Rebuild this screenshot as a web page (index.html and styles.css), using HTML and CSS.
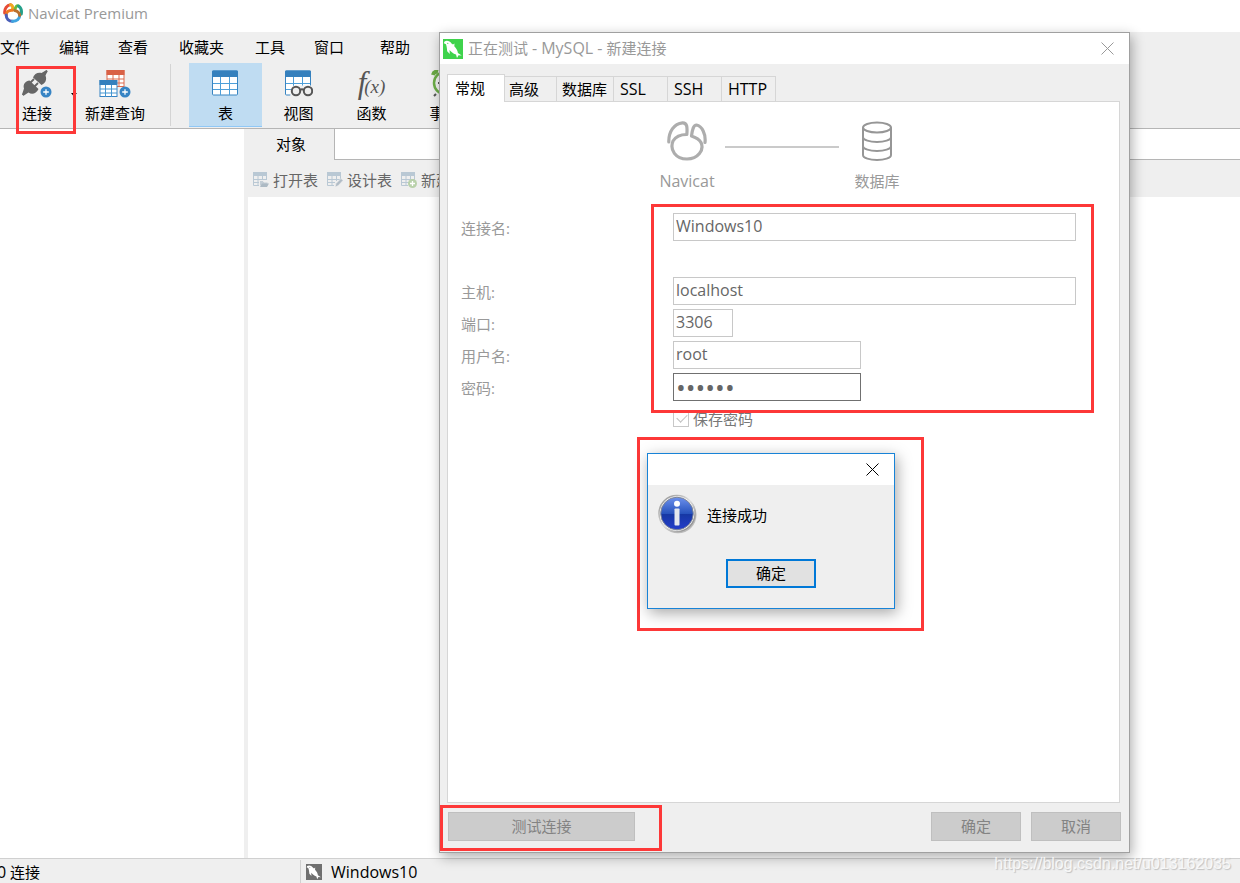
FILE: index.html
```html
<!DOCTYPE html>
<html lang="zh-CN">
<head>
<meta charset="utf-8">
<title>Navicat Premium</title>
<link rel="stylesheet" href="styles.css">
</head>
<body>
<svg class="defs" aria-hidden="true">
  <symbol id="table" viewBox="0 0 26 26"><rect x=".5" y="1" width="25" height="24" rx="1" fill="#fff" stroke="#3885c2"/><path d="M0 1.500Q0 .5 1 .5H25Q26 .5 26 1.500V7H0z" fill="#3580bd"/><path d="M8.500 7V25M17.500 7V25M1 13.500H25M1 19.500H25" stroke="#4d9fd9" fill="none"/></symbol>
  <symbol id="plus" viewBox="0 0 12 12"><circle cx="6" cy="6" r="5.500" fill="#3784c4"/><path d="M6 3.200V8.800M3.200 6H8.800" stroke="#fff" stroke-width="1.300"/></symbol>
  <symbol id="smalltable" viewBox="0 0 16 16"><path d="M0 0H14V4H0z" fill="#b9c8d4"/><path d="M.5 4V13.500H7M5 4V13.500M9.500 4V9M13.500 4V7M0 7.500H14M0 10.500H8" stroke="#b9c8d4" fill="none"/></symbol>
  <symbol id="dolphin" viewBox="0 0 20 20"><path d="M1.500 2.500C4 1 7 2.200 8.500 4.500L10 5.500 11.500 4.500 11.300 7.200C13.500 9.500 14.800 12 14.900 14L18.700 16.500 15.500 16.300 14 19 13 15.500C10 14.600 8 12.700 6.500 11L6.800 15 4.200 12.300C4 9 3.500 6.500 3 5.200L.8 4.200z" fill="#fff"/><circle cx="4.800" cy="4.300" r=".6" fill="currentColor"/></symbol>
</svg>
<div class="app">
  <header class="titlebar">
    <svg class="logo" viewBox="0 0 20 20" fill="none" stroke-width="3" stroke-linecap="round">
      <path d="M1.700 10C1.300 5.500 4 2 7.500 1.700" stroke="#e64b36"/><path d="M7.500 1.700C9.800 1.700 9.800 4 9.600 6.500" stroke="#f0a81f"/>
      <path d="M12 7C12.200 4 14 2.200 15.500 3" stroke="#6cbb3c"/><path d="M15.500 3C18 4.500 18.800 8 18.300 11" stroke="#25a08a"/>
      <path d="M9.500 7.200C5.500 6.900 3.200 9.200 3.200 12" stroke="#ef7a22"/><path d="M3.200 12C3.200 16 5.800 18.300 9.500 18.300" stroke="#4a5fb8"/><path d="M9.500 18.300C14 18.300 16.800 16 16.700 12.300" stroke="#3fa4e0"/><path d="M16.700 12.300C16.500 10 14.500 8.200 12 7.600" stroke="#b9702f"/>
    </svg>
    <span>Navicat Premium</span>
  </header>
  <nav class="menubar">
    <button>文件</button><button>编辑</button><button>查看</button><button class="spaced">收藏夹</button><button class="spaced">工具</button><button>窗口</button><button class="help">帮助</button>
  </nav>
  <div class="toolbar">
    <button class="tool connect">
      <svg width="32" height="28" viewBox="0 0 32 28"><g fill="#666"><path d="M1 24.500L3 18.500C1.500 14 5 11 8.500 10.500L17.500 19C15.500 23.500 11 25 7.500 22.500L2.500 25.800z"/><path d="M12 7.500C13 4 17 1.800 20.500 3L25.500 0 26.500 1 24.500 5.500C26.300 10 24 13.500 20.500 15z"/></g><path d="M9.500 12.500L13 9M13.500 16.500L17 13" stroke="#666" stroke-width="1.800"/><path d="M2 25L4.500 21.500M22.500 4.500L26 1" stroke="#666" stroke-width="2"/><use href="#plus" x="19" y="16" width="12" height="12"/></svg>
      <span>连接</span>
    </button>
    <button class="drop" aria-label="更多连接"><svg width="6" height="4" viewBox="0 0 6 4"><path d="M0 0H6L3 3.500z"/></svg></button>
    <button class="tool query">
      <svg width="32" height="28" viewBox="0 0 32 28"><rect x="8" y=".5" width="17" height="16" fill="#fff" stroke="#dd6b4f"/><path d="M7.500 0H25.500V5H7.500z" fill="#d96146"/><path d="M14 5V16M20 5V16M8 9H25M8 13H25" stroke="#dd6b4f"/><rect x="1" y="10.500" width="17" height="16" fill="#fff" stroke="#3784c4"/><path d="M.5 10H18V15H.5z" fill="#3580bd"/><path d="M6.500 15V27M12.500 15V27M1 19H18M1 23H18" stroke="#4596d1"/><use href="#plus" x="20" y="16" width="12" height="12"/></svg>
      <span>新建查询</span>
    </button>
    <i class="divider"></i>
    <button class="tool object current"><svg width="28" height="28"><use href="#table" width="26" height="26"/></svg><span>表</span></button>
    <button class="tool object"><svg width="28" height="28" viewBox="0 0 28 28"><use href="#table" x="0" width="26" height="26"/><path d="M6 18.500Q8 14.500 12 15.500H27V28H5z" fill="#efefef"/><g fill="none" stroke="#555" stroke-width="2"><circle cx="11" cy="21" r="4.200"/><circle cx="23" cy="21" r="4.200"/><path d="M15 20Q17 18.500 19 20"/></g></svg><span>视图</span></button>
    <button class="tool object"><i class="fx">f<small>(x)</small></i><span>函数</span></button>
    <button class="tool object"><svg width="28" height="28" viewBox="0 0 28 28" fill="none"><path d="M2 5Q3 1 7 2M26 5Q25 1 21 2" stroke="#6aaa46" stroke-width="4"/><circle cx="14" cy="13" r="11" fill="#f4f4f4" stroke="#6cae48" stroke-width="2.500"/><path d="M14 6V13H7M5 24L3 26M23 24L25 26" stroke="#555" stroke-width="2"/></svg><span>事件</span></button>
    <div class="mark mark-connect"></div>
  </div>
  <main class="workspace">
    <aside class="tree"></aside>
    <section class="content">
      <div class="tabstrip"><button class="objects">对象</button><div class="tabfill"></div></div>
      <div class="actions">
        <button disabled><svg width="16" height="16"><use href="#smalltable" width="16" height="16"/><path d="M6.500 14V8.500H10L11 10H15V14z" fill="#c3cdd5" stroke="#efefef"/><path d="M7 15L9 11.500H16L14 15z" fill="#adbac4"/></svg>打开表</button>
        <button disabled><svg width="16" height="16"><use href="#smalltable" width="16" height="16"/><path d="M8 15L9 11.500 14 6.500 16 8.500 11 13.800z" fill="#b1bcc6" stroke="#efefef" stroke-width=".6"/></svg>设计表</button>
        <button disabled><svg width="16" height="16"><use href="#smalltable" width="16" height="16"/><circle cx="11.500" cy="11.500" r="4.500" fill="#b9d1aa"/><path d="M11.500 9V14M9 11.500H14" stroke="#fff" stroke-width="1.300"/></svg>新建表</button>
      </div>
      <div class="canvas"></div>
    </section>
  </main>
  <footer class="statusbar">
    <span class="count"><span class="latin">0</span> 连接</span>
    <span class="connection"><svg class="gray-dolphin" width="16" height="16"><use href="#dolphin" width="16" height="16"/></svg>Windows10</span>
  </footer>
</div>

<section class="dialog" role="dialog" aria-label="新建连接">
  <header class="dialog-title">
    <svg class="green-dolphin" width="20" height="20"><use href="#dolphin" width="20" height="20"/></svg>
    <h1>正在测试 <span class="latin">- MySQL -</span> 新建连接</h1>
    <button class="close" aria-label="关闭"><svg width="13" height="13" viewBox="0 0 13 13"><path d="M.5 .5L12.500 12.500M12.500 .5L.5 12.500"/></svg></button>
  </header>
  <div class="dialog-body">
    <div class="tabs">
      <button class="active">常规</button><button>高级</button><button>数据库</button><button>SSL</button><button>SSH</button><button>HTTP</button>
    </div>
    <form class="panel">
      <div class="diagram">
        <div class="node"><svg width="40" height="40" viewBox="0 0 40 40" fill="none" stroke="#adadad" stroke-width="3.200" stroke-linecap="round" stroke-linejoin="round"><path d="M1.800 21C1.500 11 7 2.500 15.500 1.800C20 1.600 20.500 6 19.800 13.500C13 13.500 8.500 15.800 6 20C2.500 29 8.500 38 20 38C31 38 37.500 29 34 21.500C32 18 29 16.500 24.500 15C25.500 8 26.500 4 29.500 4C35 5 39 13 38 21.500"/></svg><span class="latin">Navicat</span></div>
        <i class="link"></i>
        <div class="node"><svg width="32" height="40" viewBox="0 0 32 40" fill="none" stroke="#969696" stroke-width="2"><ellipse cx="16" cy="6.500" rx="14" ry="5"/><path d="M2 6.500V34C2 40.500 30 40.500 30 34V6.500M2 16C2 22.500 30 22.500 30 16M2 25C2 31.500 30 31.500 30 25"/></svg><span>数据库</span></div>
      </div>
      <div class="fields">
        <label for="name">连接名:</label><input id="name" value="Windows10" readonly>
        <label class="after-gap" for="host">主机:</label><input class="after-gap" id="host" value="localhost" readonly>
        <label for="port">端口:</label><input class="short" id="port" value="3306" readonly>
        <label for="user">用户名:</label><input class="medium" id="user" value="root" readonly>
        <label for="pass">密码:</label><input class="medium focus" id="pass" type="password" value="secret" readonly>
        <label class="save"><input type="checkbox" checked disabled>保存密码</label>
      </div>
    </form>
    <div class="buttons">
      <button class="test" disabled>测试连接</button><button disabled>确定</button><button disabled>取消</button>
    </div>
  </div>
  <div class="mark mark-fields"></div>
  <div class="mark mark-message"></div>
  <div class="mark mark-test"></div>
  <section class="message" role="alertdialog" aria-label="连接成功">
    <header><button class="close" aria-label="关闭提示"><svg width="13" height="13" viewBox="0 0 13 13"><path d="M.5 .5L12.500 12.500M12.500 .5L.5 12.500"/></svg></button></header>
    <div class="notice">
      <svg width="40" height="40" viewBox="0 0 40 40"><defs><linearGradient id="blue" x2="0" y2="1"><stop stop-color="#6d91ed"/><stop offset=".5" stop-color="#2853bd"/><stop offset=".52" stop-color="#1637a4"/><stop offset="1" stop-color="#243ecb"/></linearGradient><linearGradient id="ring" x2="1" y2="1"><stop stop-color="#8a8a8a"/><stop offset=".5" stop-color="#ddd"/><stop offset="1" stop-color="#777"/></linearGradient></defs><circle cx="20" cy="20.800" r="18.500" fill="#bbb"/><circle cx="19" cy="19.500" r="18" fill="#f8f8f8" stroke="url(#ring)" stroke-width="1.500"/><circle cx="19" cy="19.500" r="16.300" fill="url(#blue)" stroke="#7d8495"/><circle cx="19" cy="9.700" r="3" fill="#fff"/><rect x="16.500" y="14.500" width="5" height="17" rx=".8" fill="#e4e7ee"/></svg>
      <p>连接成功</p>
    </div>
    <button class="ok">确定</button>
  </section>
</section>
<div class="watermark">https://blog.csdn.net/u013162035</div>
</body>
</html>
```
FILE: styles.css
```css
* { box-sizing: border-box; }
body {
  margin: 0;
  background: #efefef;
  color: #000;
  font: 15px/20px "Open Sans", "Noto Sans CJK SC", sans-serif;
  overflow: hidden;
}
button { border: 0; background: none; padding: 0; margin: 0; font: inherit; color: inherit; }
svg { display: block; flex: none; }
.defs { position: absolute; width: 0; height: 0; }
.latin { font-size: 16px; }

.app { display: flex; flex-direction: column; height: 100vh; }
.titlebar { display: flex; align-items: center; gap: 5px; height: 32px; padding: 0 3px 6px; background: #fff; color: #999; }
.logo { width: 20px; height: 20px; }
.menubar { display: flex; align-items: center; gap: 29px; height: 30px; }
.menubar .spaced { margin-left: 2px; }
.menubar .help { margin-left: 7px; }

.toolbar { position: relative; display: flex; height: 67px; padding: 1px 0 1px 16px; border-bottom: 1px solid #b5b5b5; }
.tool { display: flex; flex-direction: column; align-items: center; gap: 5px; padding-top: 7px; white-space: nowrap; }
.connect { width: 42px; }
.drop { width: 20px; padding: 0 0 0 13px; }
.query { width: 74px; }
.divider { width: 1px; margin: 1px 18px 1px 18px; background: #d4d4d4; }
.object { width: 73px; }
.current { background: #bfdcf2; border-bottom: 1px solid #90c8f6; }
.fx { height: 28px; font: italic 31px/26px "Liberation Serif", serif; color: #555; }
.fx small { margin-left: -2px; font-size: 19px; }

.workspace { display: flex; flex: 1; min-height: 0; }
.tree { width: 244px; background: #fff; }
.content { display: flex; flex: 1; flex-direction: column; min-width: 0; }
.tabstrip { display: flex; height: 31px; }
.objects { width: 90px; padding: 0 0 2px 4px; }
.tabfill { flex: 1; background: #fff; border: solid #b5b5b5; border-width: 0 0 1px 1px; }
.actions { display: flex; align-items: center; gap: 9px; height: 37px; padding: 3px 0 0 9px; color: #666; }
.actions button { display: flex; align-items: center; gap: 4px; white-space: nowrap; }
.canvas { flex: 1; margin-left: 4px; background: #fff; }
.statusbar { display: flex; height: 25px; border-top: 1px solid #d0d0d0; }
.count { width: 300px; margin-top: 3px; text-indent: -3px; }
.connection { display: flex; align-items: center; gap: 9px; margin-top: 1px; padding: 1px 0 0 5px; border-left: 1px solid #d0d0d0; font-size: 16px; }
.gray-dolphin { background: #6f6f6f; color: #6f6f6f; }
.green-dolphin { background: #3fd34c; color: #3fd34c; }

.dialog {
  position: absolute;
  left: 439px;
  top: 32px;
  width: 691px;
  border: 1px solid #a0a0a0;
  background: #efefef;
  box-shadow: 2px 4px 12px rgba(0, 0, 0, .32);
}
.dialog-title { display: flex; align-items: center; gap: 5px; height: 31px; padding: 0 15px 0 3px; background: #fff; color: #999; }
.dialog-title h1 { flex: 1; margin: 0; padding-bottom: 2px; font: inherit; }
.close path { fill: none; stroke: currentColor; }
.dialog-body { padding: 10px 8px 11px 7px; }
.tabs { display: flex; align-items: flex-end; }
.tabs button { position: relative; height: 25px; min-width: 54px; padding: 0 4px; border: solid #d6d6d6; border-width: 1px 1px 0 0; text-align: left; }
.tabs button:nth-child(2) { min-width: 52px; }
.tabs button:nth-child(3) { min-width: 57px; padding-left: 5px; }
.tabs button:nth-child(n+4) { padding-left: 6px; font-size: 16px; }
.tabs .active { z-index: 1; height: 28px; width: 58px; margin-bottom: -1px; padding: 0 0 2px 7px; border-left-width: 1px; background: #fff; }
.panel { min-height: 702px; margin-right: 1px; padding: 19px 43px 19px 13px; border: 1px solid #d6d6d6; background: #fff; }
.diagram { display: flex; margin: 0 0 22px 188px; color: #999; }
.node { display: flex; flex-direction: column; align-items: center; gap: 10px; width: 76px; }
.link { width: 114px; height: 2px; margin-top: 25px; background: #cacaca; }
.fields { display: grid; grid-template-columns: 212px 1fr; row-gap: 4px; color: #999; }
.fields > label { padding-top: 5px; height: 28px; }
.fields > input { width: 100%; height: 28px; margin: 0; padding: 0 2px 2px; border: 1px solid #c8c8c8; background: #fff; color: #666; font: 16px/20px "Open Sans", sans-serif; outline: 0; }
.fields > .after-gap { margin-top: 32px; }
.fields > .short { width: 60px; }
.fields > .medium { width: 188px; }
.fields > .focus { padding: 0 2px; border-color: #707070; font: 26px/24px "Open Sans", sans-serif; }
.fields > .save { display: flex; grid-column: 2; align-items: center; gap: 4px; padding: 0; color: #777; }
.save input { appearance: none; position: relative; width: 16px; height: 16px; margin: 0; border: 1px solid #c8c8c8; }
.save input::after { content: ""; position: absolute; left: 3px; top: 2px; width: 9px; height: 5px; border: solid #c0c0c0; border-width: 0 0 1px 1px; transform: rotate(-45deg); }
.buttons { display: flex; gap: 10px; margin-top: 9px; padding-left: 1px; }
.buttons button { width: 90px; height: 29px; padding-bottom: 2px; border: 1px solid #bfbfbf; background: #ccc; color: #838383; }
.buttons .test { width: 187px; margin-right: auto; }

.message { position: absolute; left: 207px; top: 420px; width: 248px; padding-bottom: 20px; border: 1px solid #1883d7; background: #efefef; box-shadow: 2px 4px 14px rgba(0, 0, 0, .35); }
.message header { display: flex; justify-content: flex-end; height: 31px; padding-right: 15px; background: #fff; }
.notice { display: flex; align-items: center; gap: 9px; padding: 9px 10px 0; }
.notice p { margin: 2px 0 0; }
.ok { display: block; width: 90px; height: 29px; margin: 25px auto 0; padding-bottom: 2px; border: 2px solid #0078d7; background: #e1e1e1; }

.mark { position: absolute; border: 3px solid #fd3838; pointer-events: none; }
.mark-connect { left: 16px; top: 4px; width: 60px; height: 68px; z-index: 1; }
.mark-fields { left: 211px; top: 171px; width: 443px; height: 209px; }
.mark-message { left: 197px; top: 404px; width: 287px; height: 194px; }
.mark-test { left: 0; top: 772px; width: 222px; height: 46px; }
.watermark { position: absolute; right: 9px; bottom: 9px; font: 16px/20px "Liberation Sans", sans-serif; color: rgba(255, 255, 255, .8); text-shadow: 1px 1px 1px #c0c0c0; }
```
